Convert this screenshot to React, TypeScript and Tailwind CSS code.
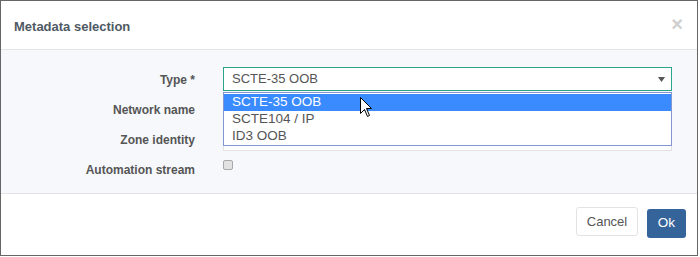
import React from 'react'

const options = ['SCTE-35 OOB', 'SCTE104 / IP', 'ID3 OOB']

function Label({ children }: { children: React.ReactNode }) {
  return (
    <div className="h-[24px] flex items-center justify-end text-[12px] font-bold text-[#555] pt-px">
      {children}
    </div>
  )
}

export default function App() {
  return (
    <div className="w-[700px] h-[257px] bg-white" style={{ fontFamily: '"Liberation Sans", Arial, sans-serif' }}>
      <div className="w-[698px] h-[256px] border border-[#666] flex flex-col bg-white">

        {/* header */}
        <div className="h-[49px] shrink-0 border-b border-[#e5e5e5] flex items-center justify-between pl-[13px] pr-[14px]">
          <h3 className="text-[13px] font-bold text-[#4f5964] mt-[3px]">Metadata selection</h3>
          <span className="text-[20px] font-bold leading-none text-[#cfcfcf] mt-[-3px]">×</span>
        </div>

        {/* body */}
        <div className="h-[144px] shrink-0 bg-[#f7f8fc] border-b border-[#e3e3e6] pt-[17px]">
          <div className="grid grid-cols-[194px_449px] gap-x-[28px] gap-y-[6px]">
            <Label>Type *</Label>
            <div className="relative">
              <div className="h-[24px] bg-white border border-[#2aa58b] flex items-center justify-between pl-[8px] pr-[6px] text-[13px] text-[#555]">
                <span>SCTE-35 OOB</span>
                <svg width="7" height="5" viewBox="0 0 7 5">
                  <path d="M0 0 L7 0 L3.5 5 Z" fill="#555" />
                </svg>
              </div>
              <div className="absolute left-0 right-0 top-[25px] z-10 bg-white border border-[#8396d2] pt-px">
                {options.map((o, i) => (
                  <div
                    key={o}
                    className={
                      'h-[17px] flex items-center pl-[8px] text-[13.5px] ' +
                      (i === 0 ? 'bg-[#3a8bff] text-white' : 'text-[#555]')
                    }
                  >
                    {o}
                  </div>
                ))}
              </div>
              <svg className="absolute left-[137px] top-[30px] z-20" width="13" height="21" viewBox="0 0 13 21">
                <path d="M0.5 0.5 L0.5 16.5 L4.5 12.5 L7.5 19.5 L9.5 18.5 L6.5 11.5 L11.5 11.5 Z" fill="#fff" stroke="#000" strokeWidth="1" />
              </svg>
            </div>

            <Label>Network name</Label>
            <div className="h-[24px] bg-white border border-[#e2e2e2]" />

            <Label>Zone identity</Label>
            <div className="h-[24px] bg-white border border-[#e2e2e2]" />

            <Label>Automation stream</Label>
            <div className="h-[24px]">
              <div className="w-[10px] h-[10px] mt-[3px] bg-[#e2e2e2] border border-[#a9a9a9] rounded-[2px]" />
            </div>
          </div>
        </div>

        {/* footer */}
        <div className="flex-1 flex justify-end items-start gap-[9px] pt-[13px] pr-[11px]">
          <button className="h-[29px] w-[62px] bg-white border border-[#e3e3e3] rounded-[3px] text-[13px] text-[#555]">
            Cancel
          </button>
          <button className="h-[29px] w-[39px] mt-[2px] bg-[#35649b] rounded-[3px] text-[13.5px] text-white">
            Ok
          </button>
        </div>

      </div>
    </div>
  )
}
